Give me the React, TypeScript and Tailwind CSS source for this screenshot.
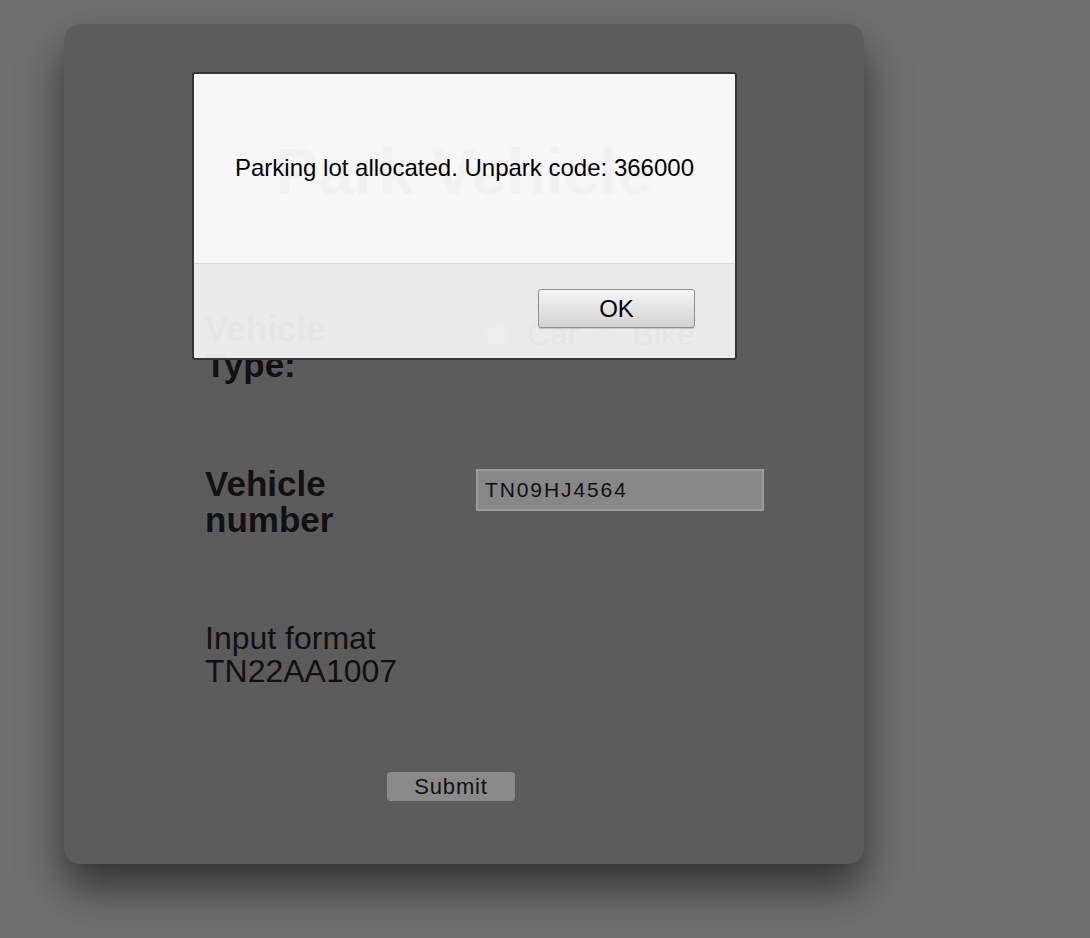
import { useState } from 'react';

// Radio dot, drawn the way the dimmed page shows it under the alert.
function Radio({ checked }: { checked?: boolean }) {
  return (
    <span
      className={`flex h-[24px] w-[24px] shrink-0 items-center justify-center rounded-full border ${
        checked ? 'border-[#35507a] bg-[#35507a]' : 'border-[#6a6a6a] bg-[#8c8c8c]'
      }`}
    >
      {checked && <span className="h-[9px] w-[9px] rounded-full bg-[#8c8c8c]" />}
    </span>
  );
}

export default function App() {
  const [plate, setPlate] = useState('TN09HJ4564');
  const [type, setType] = useState<'car' | 'bike'>('bike');

  return (
    <div
      className="h-[938px] overflow-hidden bg-[#6f706f] pl-[64px] pt-[24px]"
      style={{ fontFamily: '"Liberation Sans", Arial, sans-serif' }}
    >
      <div className="relative h-[840px] w-[800px] rounded-[16px] bg-[#5c5c5c] pt-[116px] text-[#111] shadow-[0_24px_44px_rgba(0,0,0,0.55)]">
        <h1 className="text-center text-[64px] font-bold leading-[64px]">Park Vehicle</h1>

        <div className="pl-[141px]">
          {/* vehicle type */}
          <div className="mt-[107px] grid grid-cols-[280px_1fr]">
            <p className="w-[200px] text-[35px] font-bold leading-[36px]">Vehicle Type:</p>
            <div className="mt-[5px] flex h-[36px] items-center text-[32px]">
              <label className="flex items-center" onClick={() => setType('car')}>
                <Radio checked={type === 'car'} />
                <span className="ml-[18px] mr-[13px]">Car</span>
              </label>
              <label className="flex items-center" onClick={() => setType('bike')}>
                <Radio checked={type === 'bike'} />
                <span className="ml-[17px]">Bike</span>
              </label>
            </div>
          </div>

          {/* vehicle number */}
          <div className="mt-[83px] grid grid-cols-[271px_1fr]">
            <p className="w-[200px] text-[35px] font-bold leading-[36px]">Vehicle number</p>
            <input
              value={plate}
              onChange={(e) => setPlate(e.target.value)}
              className="mt-[3px] h-[42px] w-[288px] border-2 border-[#9b9b9b] bg-[#878787] pl-[7px] text-[21px] tracking-[1.9px] text-[#111] outline-none"
            />
          </div>

          <p className="mt-[84px] w-[200px] text-[32px] leading-[33px]">Input format TN22AA1007</p>

          <button className="ml-[182px] mt-[84px] h-[29px] w-[128px] rounded-[4px] bg-[#8a8a8a] text-[22px] leading-[29px] tracking-[0.8px] text-[#111]">
            Submit
          </button>
        </div>

        {/* alert */}
        <div className="absolute left-[128px] top-[48px] flex h-[288px] w-[545px] flex-col overflow-hidden rounded-[3px] border-2 border-[#353535]">
          <div className="flex h-[189px] items-center justify-center bg-white/95 pb-[2px] text-[24px] text-black">
            Parking lot allocated. Unpark code: 366000
          </div>
          <div className="h-px bg-[#dadada]" />
          <div className="flex flex-1 justify-end bg-[#f2f2f2]/95 pr-[40px] pt-[25px]">
            <button className="h-[39px] w-[157px] rounded-[3px] border border-[#8e8e8e] bg-gradient-to-b from-[#f6f6f6] to-[#d3d3d3] text-[24px] text-black shadow-[0_1px_1px_rgba(0,0,0,0.15)]">
              OK
            </button>
          </div>
        </div>
      </div>
    </div>
  );
}
